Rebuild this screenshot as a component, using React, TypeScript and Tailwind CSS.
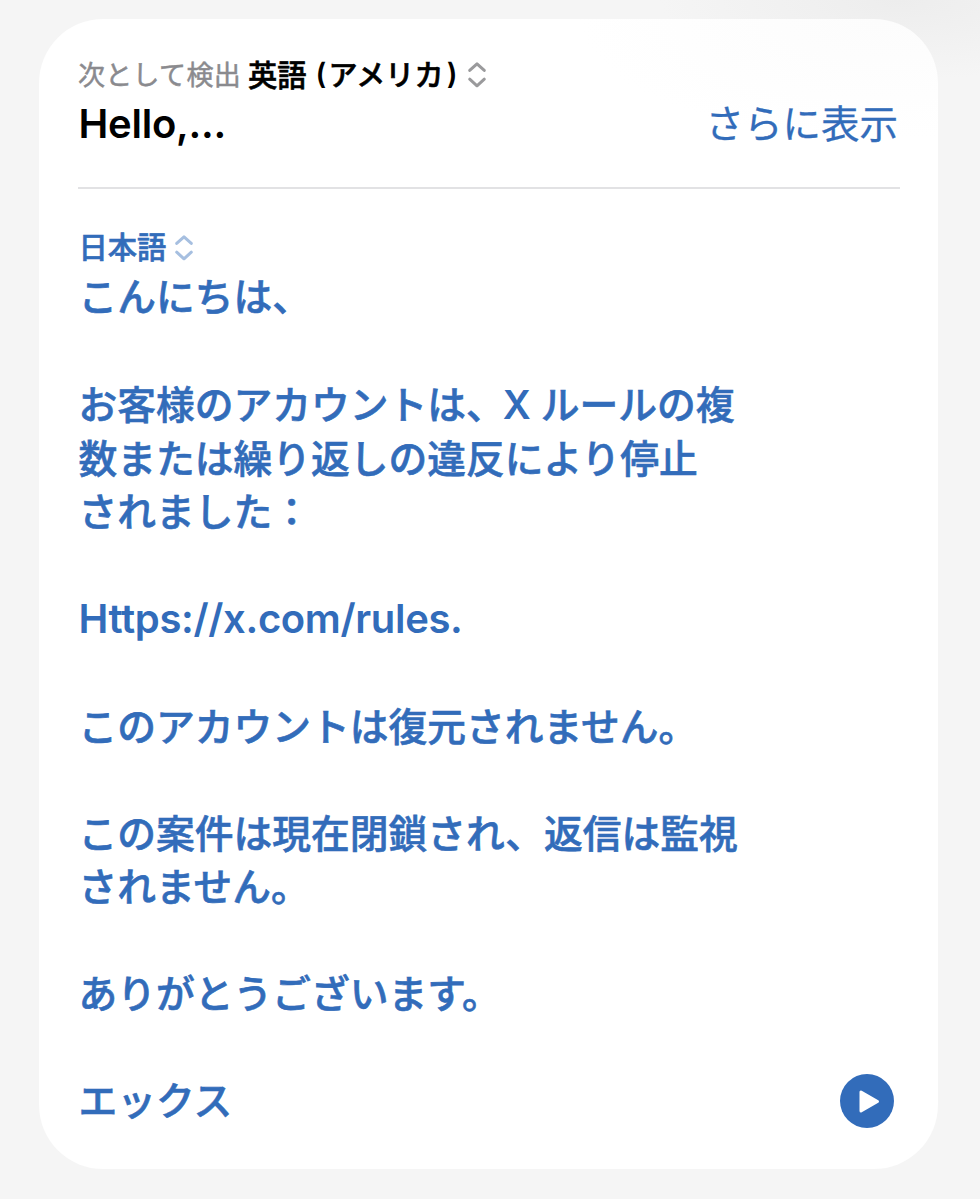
import React from "react";

const jp = "font-['Noto_Sans_CJK_JP',sans-serif]";

function Chevrons({ className }: { className: string }) {
  return (
    <svg viewBox="0 0 20 28" className={className} fill="none" stroke="currentColor" strokeWidth="3" strokeLinecap="round" strokeLinejoin="round">
      <path d="M2.7 9.4 10 2.8l7.3 6.6M2.7 18.2l7.3 6.6 7.3-6.6" />
    </svg>
  );
}

function Line({ children }: { children?: React.ReactNode }) {
  return <p className="h-[53.57px] whitespace-pre leading-[53.57px]">{children}</p>;
}

export default function App() {
  return (
    <div lang="ja" className={`${jp} flex h-[1199px] w-[980px] flex-col bg-[#f5f5f5] bg-[radial-gradient(ellipse_240px_80px_at_900px_0px,#ededed,#f5f5f5)] pt-[19px] pl-[39px]`}>
      <main className="flex h-[1150px] w-[899px] flex-col rounded-[64px] bg-white bg-[radial-gradient(ellipse_300px_120px_at_840px_0px,#fcfcfc,#ffffff)] pr-[38px] pl-[39px]">
        <header className="flex h-[170px] flex-col border-b-2 border-[#e2e2e4] pt-[35px]">
          <div className="flex h-10 items-center whitespace-pre">
            <span className="text-[27px] tracking-[0.3px] text-[#8a8a8e] [-webkit-text-stroke:0.5px]">次として検出</span>
            <span className="ml-[7px] text-[29.3px] font-medium text-black [-webkit-text-stroke:0.6px]">英語</span>
            <span className="ml-[9px] font-['Inter',sans-serif] text-[29px] font-semibold">(</span>
            <span className="ml-[2px] text-[29px] font-medium tracking-[0.2px] [-webkit-text-stroke:0.6px]">アメリカ</span>
            <span className="ml-[3px] font-['Inter',sans-serif] text-[29px] font-semibold">)</span>
            <Chevrons className="mt-px ml-[9px] h-7 w-5 text-[#9a9a9c]" />
          </div>
          <div className="flex h-[54px] items-center justify-between">
            <h1 className="pt-[5px] pl-[0.5px] font-['Inter',sans-serif] text-[40px] font-semibold tracking-[-0.25px] text-black">Hello,...</h1>
            <button className="pr-[2px] text-[38.5px] leading-[54px] text-[#326cba] [-webkit-text-stroke:0.3px]">さらに表示</button>
          </div>
        </header>

        <section className="flex flex-col pt-[40px] text-[#326cba]">
          <div className="flex h-10 items-center">
            <span className="-mt-[6px] pl-[0.5px] text-[29.3px] font-medium [-webkit-text-stroke:0.6px]">日本語</span>
            <Chevrons className="-mt-[2px] ml-[7.5px] h-7 w-5 text-[#a6bfe0]" />
          </div>
          <div className="flex items-end justify-between">
            <div className="pl-[0.5px] text-[38.75px] font-medium [-webkit-text-stroke:0.6px]">
              <div className="-mt-px mb-px">
                <Line>こんにちは、</Line>
              </div>
              <Line />
              <Line>お客様のアカウントは、<span className="-ml-[2px] font-['Inter',sans-serif] text-[39px] font-semibold [-webkit-text-stroke:0px]">X </span>ルールの複</Line>
              <Line>数または繰り返しの違反により停止</Line>
              <Line>されました：</Line>
              <Line />
              <Line>
                <span className="font-['Inter',sans-serif] text-[40px] font-semibold tracking-[-0.35px] [-webkit-text-stroke:0px]">Https://x.com/rules.</span>
              </Line>
              <Line />
              <Line>このアカウントは復元されません。</Line>
              <Line />
              <Line>この案件は現在閉鎖され、返信は監視</Line>
              <Line>されません。</Line>
              <Line />
              <Line>ありがとうございます。</Line>
              <Line />
              <Line>エックス</Line>
            </div>
            <button aria-label="再生" className="mr-[6px] -mb-[2px] flex size-[54px] items-center justify-center rounded-full bg-[#326cba]">
              <svg viewBox="0 0 54 54" className="size-[54px]" fill="white" stroke="white" strokeWidth="3" strokeLinejoin="round">
                <path d="M21 18v19l16.5-9.5Z" />
              </svg>
            </button>
          </div>
        </section>
      </main>
    </div>
  );
}
